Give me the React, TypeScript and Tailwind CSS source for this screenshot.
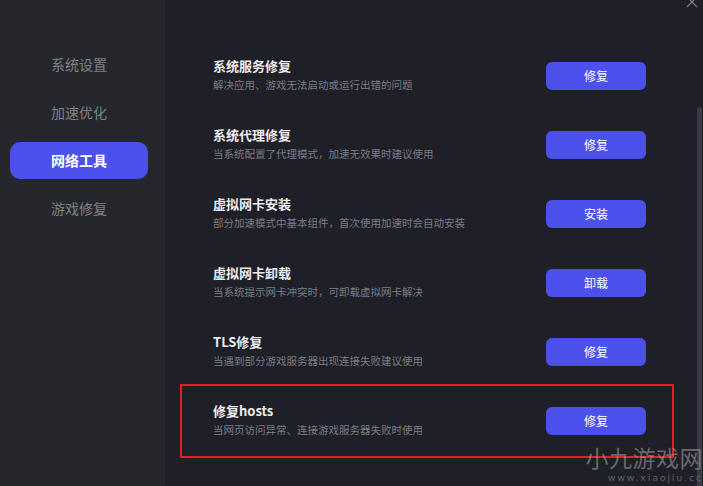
const font = { fontFamily: '"Noto Sans CJK SC", "Noto Sans", sans-serif' };

const menus = ["系统设置", "加速优化", "网络工具", "游戏修复"];

const tools = [
  { title: "系统服务修复", desc: "解决应用、游戏无法启动或运行出错的问题", action: "修复" },
  { title: "系统代理修复", desc: "当系统配置了代理模式，加速无效果时建议使用", action: "修复" },
  { title: "虚拟网卡安装", desc: "部分加速模式中基本组件，首次使用加速时会自动安装", action: "安装" },
  { title: "虚拟网卡卸载", desc: "当系统提示网卡冲突时，可卸载虚拟网卡解决", action: "卸载" },
  { title: "TLS修复", desc: "当遇到部分游戏服务器出现连接失败建议使用", action: "修复" },
  { title: "修复hosts", desc: "当网页访问异常、连接游戏服务器失败时使用", action: "修复" },
];

export default function App() {
  return (
    <div className="relative flex w-[703px] h-[486px] overflow-hidden bg-[#1e1f27]" style={font}>
      {/* sidebar */}
      <div className="flex flex-col gap-[11px] w-[165px] h-full bg-[#26272c] pt-[46px] px-[10px] pr-[17px]">
        {menus.map((m) => (
          <div
            key={m}
            className={`flex items-center justify-center h-[37px] rounded-[10px] text-[14px] ${
              m == "网络工具" ? "bg-[#4b51ea] text-white font-bold" : "text-[#808187]"
            }`}
          >
            {m}
          </div>
        ))}
      </div>

      {/* content */}
      <div className="relative flex-1 flex flex-col pt-[41px] pl-[48px] pr-[57px]">
        {tools.map((t, i) => (
          <div key={t.title} className="relative flex items-center justify-between h-[69px]">
            <div className="flex flex-col gap-[3px] -mt-[1px]">
              <div className="text-[13px] leading-[16px] font-bold text-[#ececef]">{t.title}</div>
              <div className="text-[10.5px] leading-[16px] text-[#7b7d86]">{t.desc}</div>
            </div>
            <button className="w-[100px] h-[28px] rounded-[6px] bg-[#4b51ea] text-white text-[12px]">
              {t.action}
            </button>
            {i == tools.length - 1 && (
              <div className="absolute left-[-33px] right-[-28px] top-[-2px] bottom-[-3px] border-2 border-[#e5201c] rounded-[1px]" />
            )}
          </div>
        ))}

        {/* close */}
        <svg className="absolute right-[5px] top-[-4px]" width="12" height="12" viewBox="0 0 12 12">
          <path d="M1 1 L11 11 M11 1 L1 11" stroke="#80818a" strokeWidth="1.2" />
        </svg>

        {/* scrollbar */}
        <div className="absolute right-[1px] top-[107px] bottom-[-4px] w-[5px] rounded-full bg-[#3a3b46]" />
      </div>

      {/* watermark */}
      <div className="absolute right-[0px] bottom-[3px] flex flex-col items-end gap-[3px] pointer-events-none">
        <div className="text-[23px] leading-[23px] text-[#9a9ba0]/60 tracking-[0.5px]">小九游戏网</div>
        <div
          className="text-[9.5px] leading-[11px] text-[#8e8f94]/60 tracking-[1.8px]"
          style={{ fontFamily: '"DejaVu Sans", sans-serif' }}
        >
          www.xiaojiu.cc
        </div>
      </div>
    </div>
  );
}
